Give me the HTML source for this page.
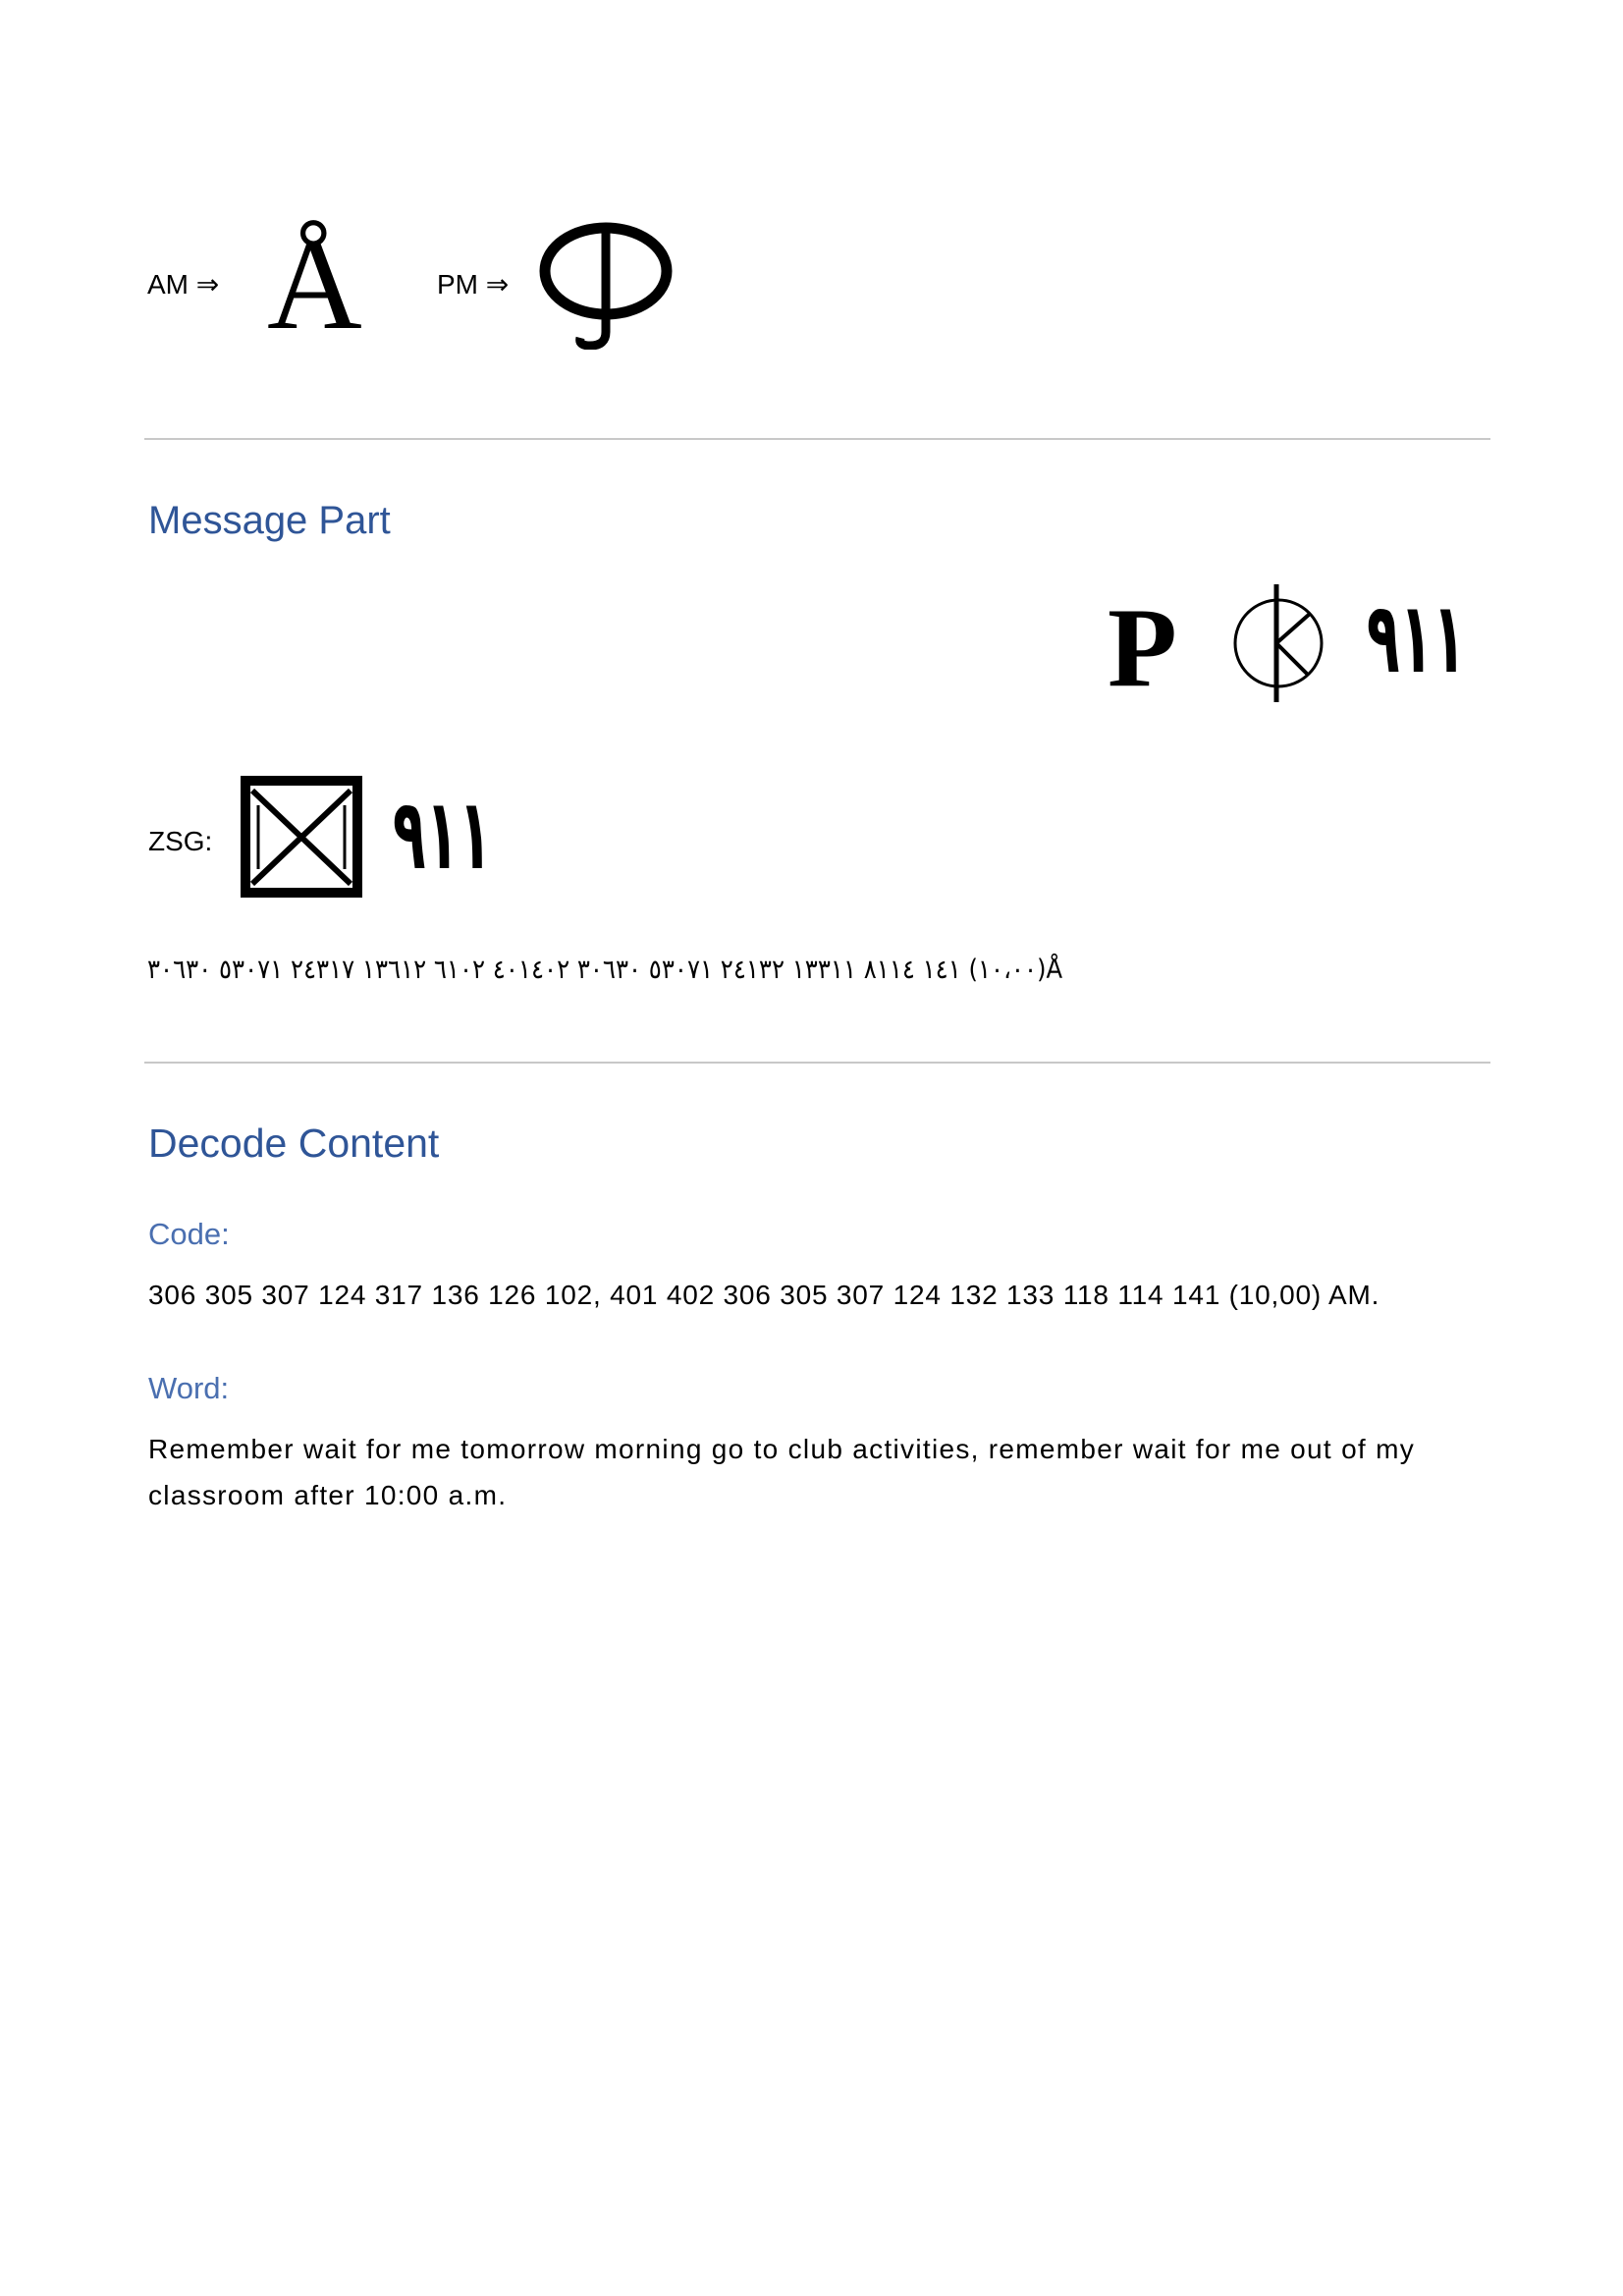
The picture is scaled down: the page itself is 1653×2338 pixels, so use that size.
<!DOCTYPE html>
<html><head><meta charset="utf-8"><style>
body{margin:0;width:1653px;height:2338px;background:#fff;position:relative;font-family:"Liberation Sans",sans-serif;color:#000;overflow:hidden}
.a{position:absolute;white-space:nowrap;line-height:1}
.hr{position:absolute;left:147px;width:1371px;height:2px;background:#c8c8c8}
.h{color:#2f5597;font-size:40px}
.l{color:#4a6fb0;font-size:31px}
.b{font-size:28px}
.n{font-size:100px;font-family:'DejaVu Sans',sans-serif;font-weight:bold;transform:scaleX(0.55);transform-origin:0 0}
</style></head><body>
<div class="a b" style="left:150px;top:276px">AM ⇒</div>
<div class="a" style="left:272px;top:222px;font-family:'Liberation Serif',serif;font-size:134px">Å</div>
<div class="a b" style="left:445px;top:276px">PM ⇒</div>
<svg class="a" style="left:545px;top:226px" width="145" height="130" viewBox="0 0 145 130">
<ellipse cx="72" cy="50" rx="62" ry="44" fill="none" stroke="#000" stroke-width="11"/>
<path d="M72 6 L72 112 Q72 126 56 126 Q44 126 46 118" fill="none" stroke="#000" stroke-width="9"/>
</svg>
<div class="hr" style="top:446px"></div>
<div class="a h" style="left:151px;top:510px">Message Part</div>
<div class="a" style="left:1128px;top:602px;font-family:'Liberation Serif',serif;font-weight:bold;font-size:116px">P</div>
<svg class="a" style="left:1252px;top:595px" width="100" height="120" viewBox="0 0 100 120">
<circle cx="50" cy="60" r="44" fill="none" stroke="#000" stroke-width="3"/>
<line x1="48" y1="0" x2="48" y2="120" stroke="#000" stroke-width="5"/>
<path d="M48 60 L82 30 M48 60 L80 92" stroke="#000" stroke-width="4" fill="none"/>
</svg>
<div class="a n" style="left:1392px;top:600px">٩١١</div>
<div class="a b" style="left:151px;top:843px">ZSG:</div>
<svg class="a" style="left:245px;top:790px" width="124" height="124" viewBox="0 0 124 124">
<rect x="5" y="5" width="114" height="114" fill="none" stroke="#000" stroke-width="10"/>
<path d="M12 15 L112 110 M112 15 L12 110" stroke="#000" stroke-width="6"/>
<path d="M18 30 L18 95 M106 30 L106 95" stroke="#000" stroke-width="3"/>
</svg>
<div class="a n" style="left:400px;top:800px">٩١١</div>
<div class="a b" style="left:150px;top:974px;direction:ltr;unicode-bidi:bidi-override;font-family:'DejaVu Sans Condensed','DejaVu Sans',sans-serif;font-size:27px">٣٠٦٣٠ ٥٣٠٧١ ٢٤٣١٧ ١٣٦١٢ ٦١٠٢ ٤٠١٤٠٢ ٣٠٦٣٠ ٥٣٠٧١ ٢٤١٣٢ ١٣٣١١ ٨١١٤ ١٤١ (١٠،٠٠)Å</div>
<div class="hr" style="top:1081px"></div>
<div class="a h" style="left:151px;top:1144px;font-size:41px">Decode Content</div>
<div class="a l" style="left:151px;top:1241px">Code:</div>
<div class="a b" style="left:151px;top:1305px;letter-spacing:0.8px">306 305 307 124 317 136 126 102, 401 402 306 305 307 124 132 133 118 114 141 (10,00) AM.</div>
<div class="a l" style="left:151px;top:1398px">Word:</div>
<div class="a b" style="left:151px;top:1462px;letter-spacing:1.3px">Remember wait for me tomorrow morning go to club activities, remember wait for me out of my</div>
<div class="a b" style="left:151px;top:1509px;letter-spacing:1.3px">classroom after 10:00 a.m.</div>
</body></html>
